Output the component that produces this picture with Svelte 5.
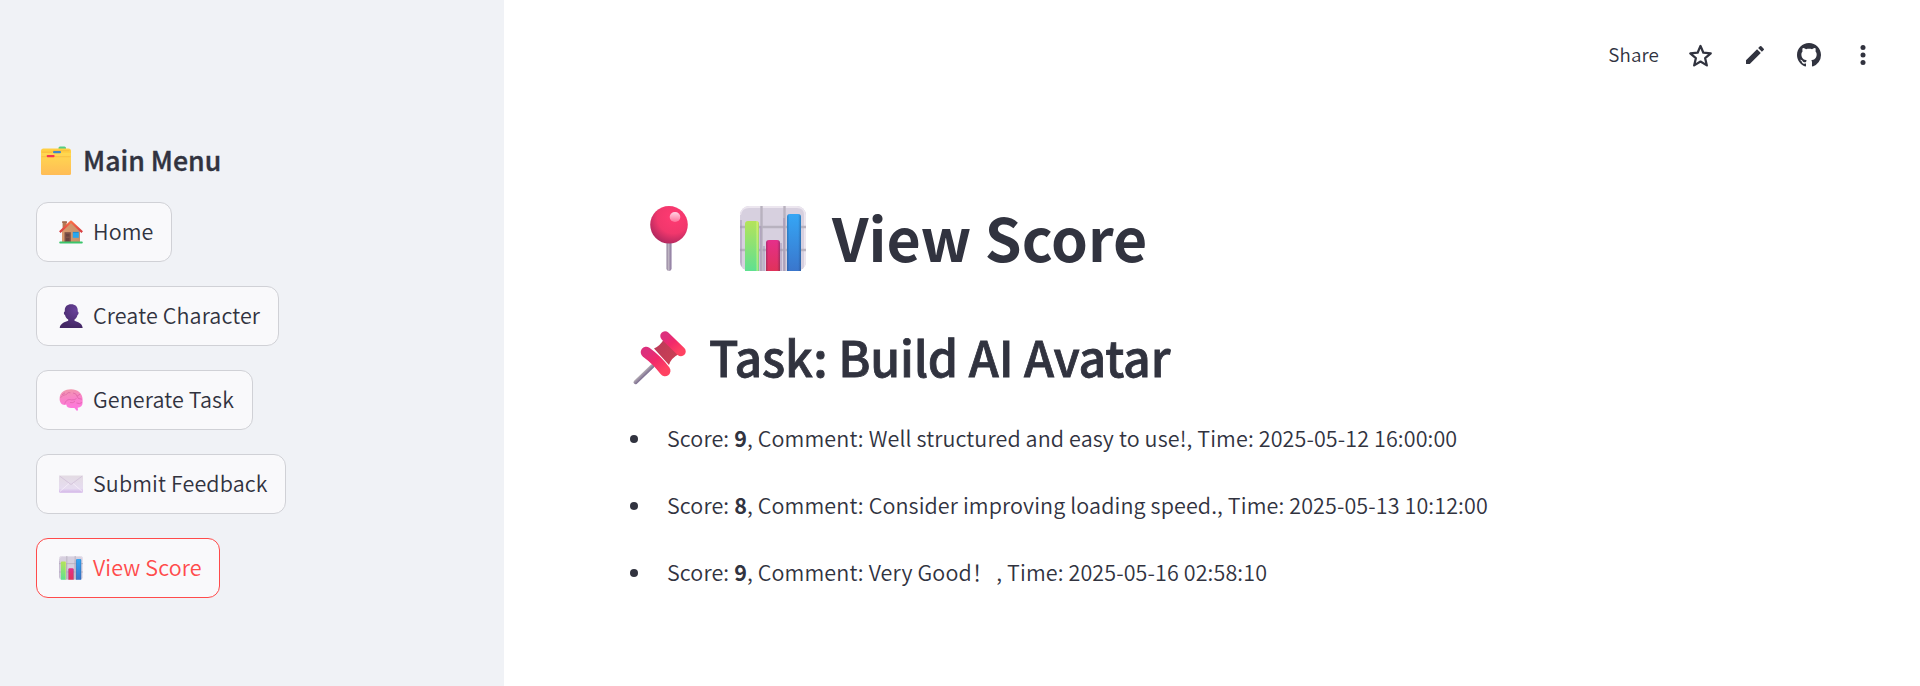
<script>
  const menu = [
    { icon: 'house', label: 'Home', width: 136 },
    { icon: 'person', label: 'Create Character', width: 243 },
    { icon: 'brain', label: 'Generate Task', width: 217 },
    { icon: 'mail', label: 'Submit Feedback', width: 250 },
    { icon: 'chart', label: 'View Score', width: 184, active: true },
  ];
  const scores = [
    { score: 9, comment: 'Well structured and easy to use!', time: '2025-05-12 16:00:00' },
    { score: 8, comment: 'Consider improving loading speed.', time: '2025-05-13 10:12:00' },
    { score: 9, comment: 'Very Good', mark: '！', time: '2025-05-16 02:58:10' },
  ];
</script>

{#snippet chart(id)}
  <svg class="emoji" viewBox="0 0 66 66">
    <defs>
      <linearGradient id="{id}-g" x2="0" y2="1"><stop offset="0" stop-color="#b4e35a" /><stop offset="1" stop-color="#5fe091" /></linearGradient>
      <linearGradient id="{id}-r" x2="0" y2="1"><stop offset="0" stop-color="#e52f8a" /><stop offset="1" stop-color="#e0325a" /></linearGradient>
      <linearGradient id="{id}-b" x2="0" y2="1"><stop offset="0" stop-color="#35a6f5" /><stop offset="1" stop-color="#3a76cc" /></linearGradient>
      <linearGradient id="{id}-s"><stop offset="0" stop-color="#fff" stop-opacity="0" /><stop offset=".75" stop-color="#fff" stop-opacity="0" /><stop offset=".9" stop-color="#ffff60" stop-opacity=".45" /><stop offset="1" stop-color="#8a7" stop-opacity=".3" /></linearGradient>
      <linearGradient id="{id}-d"><stop offset="0" stop-color="#124" stop-opacity=".25" /><stop offset=".18" stop-color="#124" stop-opacity="0" /><stop offset=".8" stop-color="#124" stop-opacity="0" /><stop offset="1" stop-color="#124" stop-opacity=".3" /></linearGradient>
      <clipPath id="{id}-c"><rect width="66" height="65" rx="9" /></clipPath>
    </defs>
    <g clip-path="url(#{id}-c)">
      <rect width="66" height="65" fill="#d7d0df" />
      <path d="M0 9Q1 1 9 1H57Q65 1 65 9V60" fill="none" stroke="#ece6ef" stroke-width="2" />
      <path d="M21.500 0V65M44.500 0V65M0 21H66M0 44H66" stroke="#b9b2bf" stroke-width="2.400" />
      <path d="M1 14V65M20.500 20V65M24 40V65M41 37V65M44 12V65" stroke="#a18fb4" stroke-width="2" opacity=".45" />
    </g>
    <path d="M5 65V18q0-3 3-3h8q3 0 3 3v47z" fill="url(#{id}-g)" />
    <path d="M5 65V18q0-3 3-3h8q3 0 3 3v47z" fill="url(#{id}-s)" />
    <path d="M26 65V37q0-3 3-3h8q3 0 3 3v28z" fill="url(#{id}-r)" />
    <path d="M26 65V37q0-3 3-3h8q3 0 3 3v28z" fill="url(#{id}-d)" />
    <path d="M47 65V11q0-3 3-3h8q3 0 3 3v54z" fill="url(#{id}-b)" />
    <path d="M47 65V11q0-3 3-3h8q3 0 3 3v54z" fill="url(#{id}-d)" />
  </svg>
{/snippet}

{#snippet icon(name)}
  {#if name === 'house'}
    <svg class="emoji" viewBox="0 0 24 24">
      <defs><linearGradient id="wall"><stop offset="0" stop-color="#d99a6e" /><stop offset="1" stop-color="#c7926c" /></linearGradient>
        <linearGradient id="roof" x2="0" y2="1"><stop offset="0" stop-color="#fb7047" /><stop offset="1" stop-color="#d63c42" /></linearGradient></defs>
      <path d="M3.600 2h4v7h-4z" fill="#b57955" /><path d="M3.200 1.200h4.700v1.800H3.200z" fill="#a06b4f" />
      <path d="M3 11 12 2.500 21 11V22H3z" fill="url(#wall)" />
      <path d="M5.500 12.200h6.300V22H5.500z" fill="#7d5147" /><path d="M7 14h3.300v2.500H7zM7 18h3.300v3H7z" fill="#6a433f" />
      <path d="M13.800 12.200h6v5.600h-6z" fill="#28a7ee" /><path d="M14 12.400h5.600" stroke="#1685cb" stroke-width=".8" />
      <path d="M.8 12.100 12 1.600l11.200 10.500" fill="none" stroke="url(#roof)" stroke-width="2.200" stroke-linejoin="round" />
      <rect x=".2" y="21.600" width="23.600" height="1.800" rx=".9" fill="#3bc56b" />
    </svg>
  {:else if name === 'person'}
    <svg class="emoji" viewBox="0 0 24 24">
      <defs><radialGradient id="bust" cx=".68" cy=".25" r=".75"><stop offset="0" stop-color="#684199" /><stop offset="1" stop-color="#432764" /></radialGradient></defs>
      <path d="M12.200.2c4 0 6.500 2.300 6.500 5.800v1.500c1.200 0 1.200 3.200-.2 3.500-.5 2.200-1.600 3.600-3 4.500v1.300c3.200 1.300 7.500 2 8.200 7.200H.7C1.300 19 6 18 9.200 16.700v-1.200C7.600 14.500 6.500 13 6 11 4.600 10.700 4.600 7.500 5.800 7.500V6C5.800 2.500 8.200.2 12.200.2z" fill="url(#bust)" />
    </svg>
  {:else if name === 'brain'}
    <svg class="emoji" viewBox="0 0 24 24">
      <defs><linearGradient id="cortex" x1=".4" x2=".55" y2="1"><stop offset="0" stop-color="#f197ad" /><stop offset=".5" stop-color="#fa7fcb" /><stop offset="1" stop-color="#ff75e2" /></linearGradient></defs>
      <path d="M.6 11C.6 4 6.200 1.200 12 1.200c6.500 0 11.600 4 11.600 10.300v3.300c0 3-2 4.800-4.900 5l.3 2.300q-.5 1-1.500.5l-2.100-2.500H12c-2.500 0-4.500-.9-4.700-3.500C3.500 17.800.6 15 .6 11z" fill="url(#cortex)" />
      <path d="M1.500 9.800q2.200-3.300 5.300-3.100M7 6.700q2-3 4.400-2M5.800 15.700c1-3.500 3.800-4.900 6.700-3.800q3.500.3 5-1.500M11 14.600q3 .6 5-1.200M14 5q3.500.3 4 3.200M18 8.200l3-2M18 8.200q.4 3 4.800 3M17.500 15q3 1.500 5.500-.5M3 6.800l3-2" fill="none" stroke="#d25a9c" stroke-width=".8" opacity=".7" />
    </svg>
  {:else if name === 'mail'}
    <svg class="emoji" viewBox="0 0 24 24">
      <defs><linearGradient id="paper" x2="0" y2="1"><stop offset="0" stop-color="#e3dbe3" /><stop offset=".75" stop-color="#e6dcf0" /><stop offset="1" stop-color="#d3b5e8" /></linearGradient></defs>
      <rect y="3.500" width="24" height="17.200" rx="1.200" fill="url(#paper)" />
      <path d="M.6 4 12 12.500 23.400 4" fill="none" stroke="#d3c2d9" stroke-width=".9" />
      <path d="M10 11.500.9 19.500M14 11.500l9.300 8" fill="none" stroke="#f7effb" stroke-width=".8" />
    </svg>
  {:else}
    {@render chart('small')}
  {/if}
{/snippet}

<div class="app">
  <aside>
    <h3>
      <svg class="folder" viewBox="0 0 30 30">
        <defs><linearGradient id="fold" x2="0" y2="1"><stop offset="0" stop-color="#ffd850" /><stop offset="1" stop-color="#ffbc56" /></linearGradient></defs>
        <rect x="17.500" y=".5" width="7.500" height="4" rx="1.500" fill="#55cd83" />
        <path d="M0 5q0-2.500 2.500-2.500h25q2.500 0 2.500 2.500v8H0z" fill="#ffcf44" />
        <path d="M1 6.200h10l1.500-1.500h16" fill="none" stroke="#f5ae39" stroke-width=".6" />
        <path d="M0 7h30v20.500q0 1.500-1.500 1.500h-27Q0 29 0 27.500z" fill="url(#fold)" />
        <rect x="12" y="5" width="8" height="2.200" rx="1" fill="#3f86c6" />
        <rect x="5.600" y="9" width="8" height="2.200" rx="1" fill="#f3364f" />
        <path d="M.5 10.700h5M14 10.700h15.500" stroke="#f5b33b" stroke-width=".6" />
      </svg>
      <span>Main Menu</span>
    </h3>
    <nav>
      {#each menu as item}
        <button class:active={item.active} style="width: {item.width}px">
          {@render icon(item.icon)}<span>{item.label}</span>
        </button>
      {/each}
    </nav>
  </aside>

  <main>
    <header>
      <span class="share">Share</span>
      <span class="tool star"><svg width="27" height="27" viewBox="0 0 24 24"><path d="m12 3.500 2.550 6.050 6.550.55-4.970 4.300 1.500 6.400L12 17.400l-5.630 3.400 1.500-6.400-4.970-4.300 6.550-.55z" fill="none" stroke="#31333f" stroke-width="2" stroke-linejoin="round" /></svg></span>
      <span class="tool"><svg width="24" height="24" viewBox="0 0 24 24"><path d="M3 17.250V20.500q0 .5.500.5h3.250L17.810 9.940l-3.750-3.750L3 17.250zM20.710 7.040a1 1 0 0 0 0-1.410l-2.340-2.340a1 1 0 0 0-1.410 0l-1.830 1.830 3.750 3.750 1.830-1.830z" /></svg></span>
      <span class="tool"><svg width="24" height="24" viewBox="0 0 16 16"><path d="M8 0C3.580 0 0 3.580 0 8c0 3.540 2.290 6.530 5.470 7.590.4.070.55-.17.550-.38 0-.19-.01-.82-.01-1.490-2.010.37-2.530-.49-2.690-.94-.09-.23-.48-.94-.82-1.130-.28-.15-.68-.52-.01-.53.63-.01 1.080.58 1.230.82.72 1.210 1.870.87 2.330.66.070-.52.280-.87.510-1.070-1.780-.2-3.640-.89-3.640-3.950 0-.87.310-1.590.82-2.150-.08-.2-.36-1.020.080-2.120 0 0 .67-.21 2.200.82.640-.18 1.320-.27 2-.27s1.360.090 2 .27c1.530-1.040 2.200-.82 2.200-.82.440 1.100.160 1.920.080 2.120.510.560.820 1.270.820 2.150 0 3.070-1.870 3.750-3.650 3.950.290.250.540.730.540 1.480 0 1.070-.01 1.930-.01 2.200 0 .21.150.46.550.38A8.010 8.010 0 0 0 16 8c0-4.420-3.580-8-8-8z" /></svg></span>
      <span class="tool"><svg width="30" height="30" viewBox="0 0 24 24"><circle cx="12" cy="6" r="2" /><circle cx="12" cy="12" r="2" /><circle cx="12" cy="18" r="2" /></svg></span>
    </header>

    <article>
      <h1>
        <svg class="ball" viewBox="0 0 38 65">
          <defs>
            <radialGradient id="ball" cx=".62" cy=".3" r=".72"><stop offset="0" stop-color="#ff3a72" /><stop offset=".6" stop-color="#f1376c" /><stop offset="1" stop-color="#b3285f" /></radialGradient>
            <linearGradient id="shine" x2="0" y2="1"><stop offset="0" stop-color="#ffd5e4" /><stop offset="1" stop-color="#ff6f99" /></linearGradient>
            <linearGradient id="needle"><stop offset="0" stop-color="#8b7b97" /><stop offset=".4" stop-color="#bdb3c1" /><stop offset="1" stop-color="#85709a" /></linearGradient>
          </defs>
          <path d="M16.500 34h5v29q-.5 2-2.500 2t-2.500-2z" fill="url(#needle)" />
          <circle cx="19" cy="18.800" r="18.800" fill="url(#ball)" />
          <ellipse cx="25" cy="11" rx="5.300" ry="5" fill="url(#shine)" />
        </svg>
        <span class="big">{@render chart('large')}</span>
        <span>View Score</span>
      </h1>
      <h2>
        <svg class="pin" viewBox="0 0 54 54">
          <defs>
            <linearGradient id="cap" x1=".1" x2=".9" y2="1"><stop offset="0" stop-color="#dd2f7c" /><stop offset=".45" stop-color="#f2296a" /><stop offset="1" stop-color="#ff4262" /></linearGradient>
            <linearGradient id="body" x2="1" y2=".7"><stop offset="0" stop-color="#b93a5a" /><stop offset="1" stop-color="#cb4054" /></linearGradient>
            <linearGradient id="rod" x1=".4" y1=".4" x2=".6" y2=".6"><stop offset="0" stop-color="#b8b0b6" /><stop offset="1" stop-color="#75668c" /></linearGradient>
          </defs>
          <path d="M19.500 35 2.500 51.200" stroke="url(#rod)" stroke-width="4" stroke-linecap="round" />
          <path d="M31 8Q27 15 21 17.500L36 34Q38 27 46 23z" fill="url(#body)" />
          <path d="m32 5 16 15.500" stroke="url(#cap)" stroke-width="9.500" stroke-linecap="round" />
          <path d="M13.200 21.200Q24 29 32 39.800" fill="none" stroke="url(#cap)" stroke-width="11" stroke-linecap="round" />
        </svg>
        <span>Task: Build AI Avatar</span>
      </h2>
      <ul>
        {#each scores as s}
          <li><i></i><p>Score: <b>{s.score}</b>, Comment: {s.comment}{#if s.mark}<span class="mark">{s.mark}</span>{/if}, Time: {s.time}</p></li>
        {/each}
      </ul>
    </article>
  </main>
</div>

<style>
  :global(body) { margin: 0; background: #fff; }
  .app {
    display: flex;
    height: 686px;
    overflow: hidden;
    color: #31333f;
    font-family: "Noto Sans CJK SC", sans-serif;
    font-size: 21.500px;
    font-weight: 350;
    letter-spacing: .115px;
  }
  h1, h2, h3, ul, p { margin: 0; padding: 0; }
  span, p { white-space: nowrap; }
  svg { display: block; flex: none; overflow: visible; }
  aside { width: 504px; flex: none; box-sizing: border-box; padding: 141px 36px 0; background: #f0f2f6; }
  h3 { display: flex; align-items: center; height: 40px; padding-left: 5px; gap: 12px; font-size: 26.700px; font-weight: 500; line-height: 41px; letter-spacing: 0; -webkit-text-stroke: .4px; }
  h3 span, button span, h1 > span:last-child, .share { margin-bottom: 3px; }
  .folder { width: 30px; height: 30px; }
  nav { display: flex; flex-direction: column; align-items: flex-start; gap: 24px; margin-top: 21px; }
  button {
    display: flex; align-items: center; gap: 10px; box-sizing: border-box; height: 60px; padding: 0 0 0 22px;
    border: 1px solid #d0d1d6; border-radius: 12px; background: #f9f9fb; color: inherit; font: inherit; line-height: 55px; letter-spacing: inherit;
  }
  button.active { border-color: #ff4b4b; color: #ff4b4b; }
  button .emoji { width: 24px; height: 24px; }
  main { flex: 1; min-width: 0; }
  header { display: flex; align-items: center; justify-content: flex-end; height: 60px; padding: 25px 30px 0 0; fill: #31333f; }
  .share { margin-right: 15px; font-size: 18.800px; line-height: 41px; }
  .tool { width: 54px; display: flex; justify-content: center; }
  .star svg { margin-right: 1px; }
  article { padding: 108px 0 0 126px; }
  h1 { display: flex; align-items: center; height: 90px; font-size: 59px; font-weight: 700; line-height: 89px; letter-spacing: 0; }
  .ball { width: 38px; height: 65px; margin: 1px 0 0 20px; }
  .big { width: 66px; margin: 2px 26px 0 52px; }
  .big .emoji { width: 66px; height: 66px; }
  h2 { display: flex; align-items: center; height: 80px; margin-top: 34px; font-size: 48.300px; font-weight: 500; line-height: 80px; letter-spacing: -.18px; -webkit-text-stroke: .8px; }
  h2 span { margin-bottom: 2px; }
  .pin { width: 54px; height: 54px; margin: 2px 22px 0 3px; }
  ul { display: flex; flex-direction: column; gap: 32px; margin-top: 23px; list-style: none; }
  li { display: flex; align-items: center; height: 35px; line-height: 35px; }
  i { width: 8px; height: 8px; border-radius: 50%; background: #31333f; margin: 3px 29px 0 0; }
  b { font-weight: 700; }
  .mark { letter-spacing: 3px; }
</style>
